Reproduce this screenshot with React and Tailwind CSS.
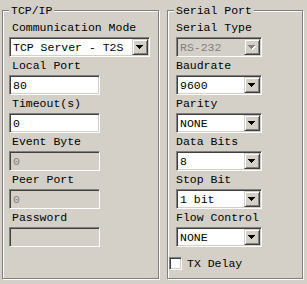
import React from 'react';

const sunken =
  'border border-t-[#808080] border-l-[#808080] border-b-white border-r-white shadow-[inset_1px_1px_0_#404040,inset_-1px_-1px_0_#d4d0c8]';

function Arrow({ disabled }) {
  const fill = disabled ? '#808080' : '#000';
  return (
    <svg width="8" height="5" viewBox="0 0 8 5" shapeRendering="crispEdges">
      {disabled && (
        <g fill="#fff">
          <rect x="1" y="1" width="7" height="1" />
          <rect x="2" y="2" width="5" height="1" />
          <rect x="3" y="3" width="3" height="1" />
          <rect x="4" y="4" width="1" height="1" />
        </g>
      )}
      <g fill={fill}>
        <rect x="0" y="0" width="7" height="1" />
        <rect x="1" y="1" width="5" height="1" />
        <rect x="2" y="2" width="3" height="1" />
        <rect x="3" y="3" width="1" height="1" />
      </g>
    </svg>
  );
}

function Select({ value, width, disabled }) {
  return (
    <div
      className={`${sunken} ${width} h-[20px] flex items-center ${disabled ? 'bg-[#d4d0c8] text-[#808080]' : 'bg-white text-black'}`}
    >
      <span className="flex-1 pl-[3px] leading-[13px] whitespace-pre">{value}</span>
      <div className="w-[16px] h-[16px] mr-[1px] bg-[#d4d0c8] border border-t-[#d4d0c8] border-l-[#d4d0c8] border-b-[#404040] border-r-[#404040] shadow-[inset_1px_1px_0_#fff,inset_-1px_-1px_0_#808080] flex items-center justify-center">
        <Arrow disabled={disabled} />
      </div>
    </div>
  );
}

function Input({ value, disabled }) {
  return (
    <div
      className={`${sunken} w-[91px] h-[20px] flex items-center ${disabled ? 'bg-[#d4d0c8] text-[#808080]' : 'bg-white text-black'}`}
    >
      <span className="pl-[3px] leading-[13px]">{value}</span>
    </div>
  );
}

function Field({ label, indent, children }) {
  return (
    <div className="flex flex-col">
      <span className={`${indent} leading-[13px] h-[13px] whitespace-pre`}>{label}</span>
      <div className="mt-[3px]">{children}</div>
    </div>
  );
}

function Group({ title, className, children }) {
  return (
    <div
      className={`relative border border-[#808080] shadow-[1px_1px_0_#fff,inset_1px_1px_0_#fff] ${className}`}
    >
      <span className="absolute left-[6px] top-[-7px] px-[2px] bg-[#d4d0c8] leading-[13px]">
        {title}
      </span>
      {children}
    </div>
  );
}

export default function App() {
  return (
    <div className="w-[307px] h-[284px] bg-[#d4d0c8] text-black text-[11.5px] font-['Liberation_Mono','Courier_New',monospace] flex pt-[10px] pl-[2px]">
      <Group title="TCP/IP" className="w-[157px] h-[269px] pl-[6px] pt-[10px]">
        <div className="flex flex-col gap-[2px]">
          <Field label="Communication Mode" indent="pl-[3px]">
            <Select value="TCP Server - T2S" width="w-[141px]" />
          </Field>
          <Field label="Local Port" indent="pl-[3px]">
            <Input value="80" />
          </Field>
          <Field label="Timeout(s)" indent="pl-[3px]">
            <Input value="0" />
          </Field>
          <Field label="Event Byte" indent="pl-[3px]">
            <Input value="0" disabled />
          </Field>
          <Field label="Peer Port" indent="pl-[3px]">
            <Input value="0" disabled />
          </Field>
          <Field label="Password" indent="pl-[3px]">
            <Input value="" disabled />
          </Field>
        </div>
      </Group>

      <Group title="Serial Port" className="ml-[8px] w-[136px] h-[269px] pl-[8px] pt-[10px]">
        <div className="flex flex-col gap-[2px]">
          <Field label="Serial Type" indent="pl-[0px]">
            <Select value="RS-232" width="w-[86px]" disabled />
          </Field>
          <Field label="Baudrate" indent="pl-[0px]">
            <Select value="9600" width="w-[86px]" />
          </Field>
          <Field label="Parity" indent="pl-[0px]">
            <Select value="NONE" width="w-[86px]" />
          </Field>
          <Field label="Data Bits" indent="pl-[0px]">
            <Select value="8" width="w-[86px]" />
          </Field>
          <Field label="Stop Bit" indent="pl-[0px]">
            <Select value="1 bit" width="w-[86px]" />
          </Field>
          <Field label="Flow Control" indent="pl-[0px]">
            <Select value="NONE" width="w-[86px]" />
          </Field>
        </div>
        <div className="mt-[10px] ml-[-7px] flex items-center">
          <div className={`${sunken} w-[13px] h-[13px] bg-white`} />
          <span className="ml-[5px] leading-[13px]">TX Delay</span>
        </div>
      </Group>
    </div>
  );
}
